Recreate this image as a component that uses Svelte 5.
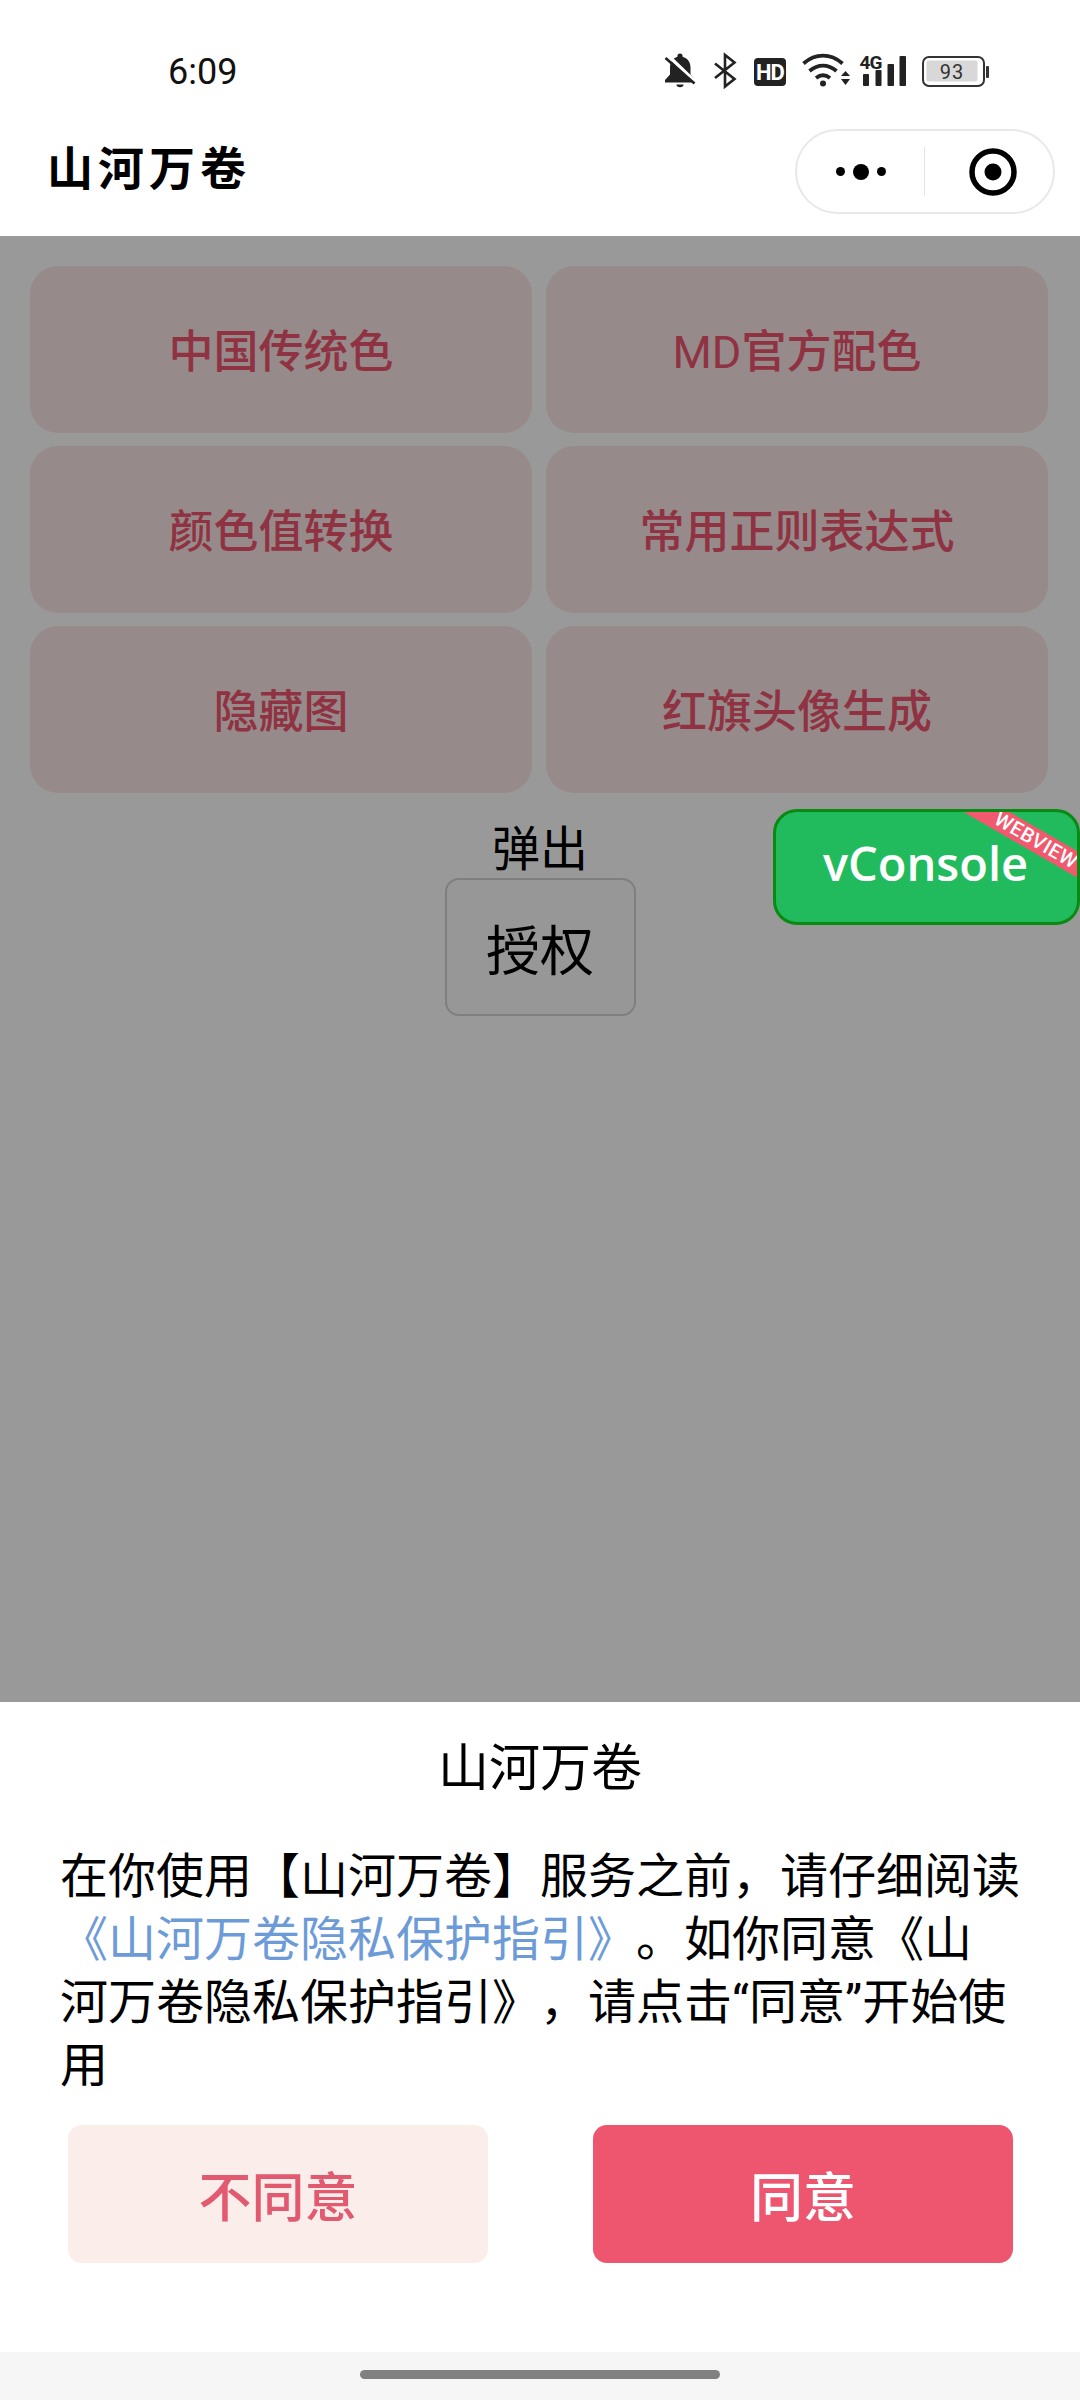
<script>
  const tools = ['中国传统色', 'MD官方配色', '颜色值转换', '常用正则表达式', '隐藏图', '红旗头像生成'];
</script>

<div class="screen">
  <div class="status">
    <span class="time">6:09</span>
    <svg class="status-icons" width="335" height="42" viewBox="0 0 335 42" aria-hidden="true">
      <path fill="#222" d="M20 3.500a2.600 2.600 0 0 1 2.600 2.600v.7c5 1.400 7.900 5.400 7.900 10.700v7l4.500 5.500v2.500H5v-2.500l5-5.500v-7c0-5.300 2.900-9.300 7.400-10.700v-.7A2.600 2.600 0 0 1 20 3.500z"/>
      <path fill="#222" d="M16.500 34.500h7a3.500 2.800 0 0 1-7 0z"/>
      <path stroke="#fff" stroke-width="3.500" d="M7 4.500l30 29"/>
      <path stroke="#222" stroke-width="2.600" d="M5.500 8l29 25.500"/>
      <path fill="none" stroke="#222" stroke-width="2.600" d="M55 13.500l19.500 15.500-9.500 7.500V5l9.500 7.500L55 28"/>
      <rect x="94" y="8" width="32" height="28" rx="4" fill="#222"/>
      <text x="110" y="29.500" class="hd">HD</text>
      <path fill="none" stroke="#222" stroke-width="3.800" d="M143.500 13.500c12-10.500 27-10.500 39 0"/>
      <path fill="none" stroke="#222" stroke-width="3.800" d="M149.500 21c8.500-7 18.500-7 27 0"/>
      <path fill="none" stroke="#222" stroke-width="3.800" d="M156 28c4.500-3.500 9.500-3.500 14 0"/>
      <circle cx="163" cy="33.500" r="3" fill="#222"/>
      <path fill="#222" d="M181 26h9l-4.500-5zM181 29h9l-4.500 6z"/>
      <text x="199.500" y="18.500" class="fourg">4G</text>
      <rect x="203" y="24" width="6" height="12" rx="1" fill="#222"/>
      <rect x="215.500" y="20" width="6" height="16" rx="1" fill="#222"/>
      <rect x="227.500" y="14" width="6.500" height="22" rx="1" fill="#222"/>
      <rect x="239.500" y="6" width="6.500" height="30" rx="1" fill="#222"/>
      <rect x="263" y="7" width="61" height="29" rx="6" fill="#fff" stroke="#333" stroke-width="2"/>
      <rect x="266.500" y="10.500" width="51" height="21" rx="2" fill="#d8d8d8"/>
      <text x="292" y="28.500" class="batt">93</text>
      <rect x="326" y="16" width="3" height="12" rx="1" fill="#333"/>
    </svg>
  </div>

  <header class="nav">
    <h1>山河万卷</h1>
    <div class="capsule">
      <div class="more" aria-label="更多"><i></i><b></b><i></i></div>
      <span class="sep"></span>
      <svg class="target" width="48" height="48" viewBox="0 0 48 48" aria-label="关闭">
        <circle cx="24" cy="24" r="21" fill="none" stroke="#000" stroke-width="5.500"/>
        <circle cx="24" cy="24" r="8.500" fill="#000"/>
      </svg>
    </div>
  </header>

  <main class="page">
    <div class="grid">
      {#each tools as t}
        <div class="card">{t}</div>
      {/each}
    </div>
    <div class="auth">
      <span class="pop">弹出</span>
      <button class="auth-btn">授权</button>
    </div>
    <div class="mask"></div>
    <div class="vconsole">
      <span class="vtext">vConsole</span>
      <span class="ribbon">WEBVIEW</span>
    </div>
  </main>

  <section class="sheet">
    <h2>山河万卷</h2>
    <p>在你使用【山河万卷】服务之前，请仔细阅读<a href="#top">《山河万卷隐私保护指引》</a>。如你同意《山河万卷隐私保护指引》，请点击“同意”开始使用</p>
    <div class="actions">
      <button class="no">不同意</button>
      <button class="yes">同意</button>
    </div>
  </section>

  <div class="home"><span></span></div>
</div>

<style>
  :global(body) { margin: 0; background: #fff; }
  .screen {
    width: 1080px; height: 2400px; display: flex; flex-direction: column; overflow: hidden;
    font-family: Roboto, "Noto Sans CJK SC", sans-serif; color: #000;
    text-spacing-trim: space-all;
  }
  .status { height: 144px; flex: none; box-sizing: border-box; padding: 50px 0 0 168px; display: flex; justify-content: space-between; align-items: flex-start; }
  .time { font-size: 36px; line-height: 44px; font-weight: 450; color: #111; }
  .status-icons { margin-right: 85px; }
  .hd { font: 700 22px Roboto, sans-serif; fill: #fff; text-anchor: middle; letter-spacing: -1px; }
  .fourg { font: 700 19px Roboto, sans-serif; fill: #222; letter-spacing: -1px; }
  .batt { font: 400 20px Roboto, sans-serif; fill: #333; text-anchor: middle; letter-spacing: 1px; }

  .nav { height: 92px; flex: none; display: flex; align-items: flex-start; justify-content: space-between; padding: 0 25px 0 47px; box-sizing: border-box; }
  .nav h1 { margin: 0; font-size: 46px; line-height: 50px; font-weight: 700; letter-spacing: 5px; }
  .capsule { width: 260px; height: 85px; margin-top: -15px; box-sizing: border-box; border: 2px solid #e8e8e8; border-radius: 43px; display: flex; align-items: center; background: #fff; }
  .more { width: 127px; display: flex; justify-content: center; align-items: center; gap: 8px; }
  .more i { width: 9px; height: 9px; border-radius: 50%; background: #000; }
  .more b { width: 16px; height: 16px; border-radius: 50%; background: #000; }
  .sep { width: 1px; height: 49px; background: #e4e4e4; }
  .target { margin-left: 44px; }

  .page { flex: 1; position: relative; background: #fff; }
  .grid { display: grid; grid-template-columns: 502px 502px; gap: 13px 14px; padding: 30px 0 0 30px; }
  .card { height: 167px; box-sizing: border-box; padding-bottom: 3px; display: flex; align-items: center; justify-content: center; border-radius: 28px; background: #fce6e6; color: #ee5571; font-size: 45px; font-weight: 450; }
  .auth { display: flex; flex-direction: column; align-items: center; margin-top: 28px; }
  .pop { font-size: 48px; line-height: 57px; }
  .auth-btn { width: 191px; height: 138px; box-sizing: border-box; border: 2px solid #d4d4d4; border-radius: 14px; background: #fcfcfc; font: 400 54px Roboto, "Noto Sans CJK SC", sans-serif; color: #000; padding: 0; }
  .mask { position: absolute; inset: 0; background: rgba(0, 0, 0, 0.4); }
  .vconsole { position: absolute; left: 773px; top: 573px; width: 307px; height: 116px; box-sizing: border-box; border: 3px solid #0a8a12; border-radius: 24px; background: #21bb5e; overflow: hidden; display: flex; align-items: center; justify-content: center; }
  .vtext { color: #fff; font: 600 47px "Open Sans", sans-serif; margin-top: -8px; margin-right: 2px; }
  .ribbon { position: absolute; left: 175px; top: 17px; width: 170px; height: 23px; background: #f0596e; color: #fff; font: 500 20px Roboto, sans-serif; line-height: 23px; text-align: center; letter-spacing: 0.5px; transform: rotate(30deg); }

  .sheet { height: 650px; flex: none; box-sizing: border-box; background: #fff; padding: 0 60px; }
  .sheet h2 { margin: 0; padding-top: 38px; font-size: 51px; line-height: 58px; font-weight: 400; text-align: center; }
  .sheet p { margin: 47px 0 0; font-size: 48px; line-height: 63px; width: 960px; }
  .sheet a { color: #6c9bd8; text-decoration: none; }
  .actions { display: flex; justify-content: space-between; margin: 0 7px 0 8px; padding-top: 28px; }
  .actions button { width: 420px; height: 138px; border: 0; border-radius: 14px; font: 450 53px Roboto, "Noto Sans CJK SC", sans-serif; padding: 0; }
  .no { background: #fbeeea; color: #e15a70; }
  .yes { background: #ee5670; color: #fff; }

  .home { height: 48px; flex: none; box-sizing: border-box; background: #f6f6f6; display: flex; justify-content: center; padding-top: 18px; }
  .home span { width: 360px; height: 9px; border-radius: 5px; background: #808080; }
</style>
